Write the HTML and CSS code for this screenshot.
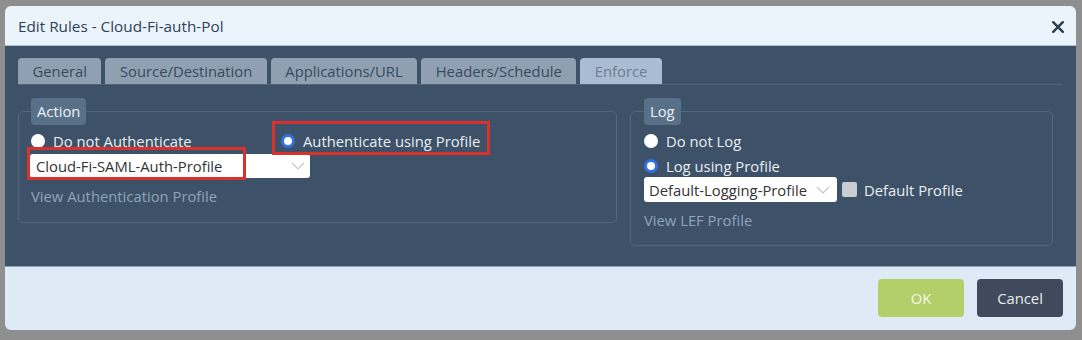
FILE: index.html
```html
<!DOCTYPE html>
<html lang="en">
<head>
<meta charset="utf-8">
<title>Edit Rules - Cloud-Fi-auth-Pol</title>
<link rel="stylesheet" href="styles.css">
</head>
<body>
<div class="dialog">
  <div class="titlebar">
    <span class="title">Edit Rules - Cloud-Fi-auth-Pol</span>
    <svg class="close" width="12" height="12" viewBox="0 0 12 12"><path d="M1.2 1.2 L10.8 10.8 M10.8 1.2 L1.2 10.8" stroke="#2c3e50" stroke-width="2.4" stroke-linecap="round" fill="none"/></svg>
  </div>
  <div class="body">
    <div class="tabs">
      <div class="tab">General</div>
      <div class="tab">Source/Destination</div>
      <div class="tab">Applications/URL</div>
      <div class="tab">Headers/Schedule</div>
      <div class="tab tab-active">Enforce</div>
    </div>
    <div class="groups">
      <fieldset class="group group-action">
        <legend>Action</legend>
        <div class="action-body">
          <div class="row">
            <label class="opt opt-first">
              <span class="radio"></span>
              <span>Do not Authenticate</span>
            </label>
            <label class="opt">
              <span class="radio radio-on"></span>
              <span>Authenticate using Profile</span>
            </label>
          </div>
          <div class="select select-action">
            <span>Cloud-Fi-SAML-Auth-Profile</span>
            <svg class="chev" width="14" height="8" viewBox="0 0 14 8"><path d="M1 1 L7 7 L13 1" stroke="#c4c8cc" stroke-width="1.2" fill="none"/></svg>
          </div>
          <div class="link">View Authentication Profile</div>
          <span class="mark mark-auth"></span>
          <span class="mark mark-select"></span>
        </div>
      </fieldset>
      <fieldset class="group group-log">
        <legend>Log</legend>
        <div class="row">
          <label class="opt">
            <span class="radio"></span>
            <span>Do not Log</span>
          </label>
        </div>
        <div class="row row-short">
          <label class="opt">
            <span class="radio radio-on"></span>
            <span>Log using Profile</span>
          </label>
        </div>
        <div class="row row-select">
          <div class="select select-log">
            <span>Default-Logging-Profile</span>
            <svg class="chev" width="14" height="8" viewBox="0 0 14 8"><path d="M1 1 L7 7 L13 1" stroke="#c4c8cc" stroke-width="1.2" fill="none"/></svg>
          </div>
          <label class="check-opt">
            <span class="checkbox"></span>
            <span>Default Profile</span>
          </label>
        </div>
        <div class="link">View LEF Profile</div>
      </fieldset>
    </div>
  </div>
  <div class="footer">
    <button class="btn btn-ok">OK</button>
    <button class="btn btn-cancel">Cancel</button>
  </div>
</div>
</body>
</html>
```

FILE: styles.css
```css
* { box-sizing: border-box; }

html, body {
  margin: 0;
  height: 100%;
}

body {
  background: #8f8f8f;
  padding: 6px 6px 0 5px;
  font-family: "Open Sans", "Noto Sans", sans-serif;
  font-size: 14.8px;
}

.dialog {
  width: 1071px;
  height: 324px;
  border-radius: 6px;
  overflow: hidden;
  display: flex;
  flex-direction: column;
}

.titlebar {
  height: 40px;
  flex: none;
  background: #ebf3fb;
  border-bottom: 1px solid #b3c2d1;
  display: flex;
  align-items: center;
  justify-content: space-between;
  padding: 0 12px 0 13px;
}

.title {
  font-size: 15.3px;
  color: #2d4157;
}

.close { display: block; margin-top: 2px; }

.body {
  height: 220px;
  flex: none;
  background: #3d5268;
  padding: 12px 13px 0 13px;
}

.tabs {
  display: flex;
  gap: 4px;
  height: 27px;
  border-bottom: 1px solid #4f657b;
}

.tab {
  height: 26px;
  line-height: 26px;
  padding: 0 14.5px;
  background: #8fa0b3;
  color: #384a5e;
  border-radius: 4px 4px 0 0;
  white-space: nowrap;
}

.tab-active {
  background: #aabcd1;
  color: #6b7e93;
}

.groups {
  display: flex;
  align-items: flex-start;
  gap: 13px;
  margin-top: 13px;
}

.group {
  margin: 0;
  min-width: 0;
  border: 1px solid #4f667c;
  border-radius: 5px;
  padding: 3px 12px 16px;
  color: #e9eef3;
}

.group-action { width: 599px; }
.group-log { width: 423px; padding: 3px 13px 15px; }

legend {
  padding: 0 6px;
  height: 27px;
  line-height: 27px;
  background: #587189;
  border-radius: 4px;
  color: #eef2f6;
}

.action-body { position: relative; }

.row {
  display: flex;
  align-items: center;
  height: 26px;
}

.row-short { height: 24px; }

.row-select {
  height: 25px;
  margin-top: -1px;
}

.opt {
  display: flex;
  align-items: center;
  gap: 8px;
  color: #e9eef3;
  white-space: nowrap;
}

.opt-first { width: 250px; }

.radio {
  width: 14px;
  height: 14px;
  border-radius: 50%;
  background: #ffffff;
  flex: none;
}

.radio-on {
  border: 3px solid #2f72e0;
  background: #ffffff;
}

.select {
  height: 24px;
  background: #ffffff;
  border-radius: 3px;
  display: flex;
  align-items: center;
  justify-content: space-between;
  padding: 0 5px 0 6px;
  color: #333333;
  white-space: nowrap;
}

.select-action {
  width: 280px;
  margin-left: -1px;
}

.select-log {
  width: 193px;
  height: 25px;
  padding: 0 7px 0 5px;
}

.chev { display: block; flex: none; }

.check-opt {
  display: flex;
  align-items: center;
  gap: 7px;
  margin-left: 5px;
  color: #e9eef3;
  white-space: nowrap;
}

.checkbox {
  width: 15px;
  height: 15px;
  border-radius: 2px;
  background: #c8cdd3;
  flex: none;
}

.link {
  margin-top: 8px;
  line-height: 20px;
  color: #8ea4ba;
}

.mark {
  position: absolute;
  border: 3px solid #d9312c;
  pointer-events: none;
}

.mark-auth {
  left: 241px;
  top: -7px;
  width: 218px;
  height: 34px;
}

.mark-select {
  left: -4px;
  top: 19px;
  width: 219px;
  height: 33px;
}

.footer {
  flex: 1;
  background: #deebf7;
  border-top: 1px solid #8fa4b9;
  display: flex;
  justify-content: flex-end;
  align-items: flex-start;
  gap: 13px;
  padding: 12px 13px 0 0;
}

.btn {
  width: 86px;
  height: 38px;
  border: none;
  border-radius: 4px;
  font-family: "Open Sans", "Noto Sans", sans-serif;
  font-size: 14.8px;
  padding: 0;
}

.btn-ok {
  background: #b3cf69;
  color: #f3f8e8;
}

.btn-cancel {
  background: #3f4b5d;
  color: #e7ebf0;
}
```
